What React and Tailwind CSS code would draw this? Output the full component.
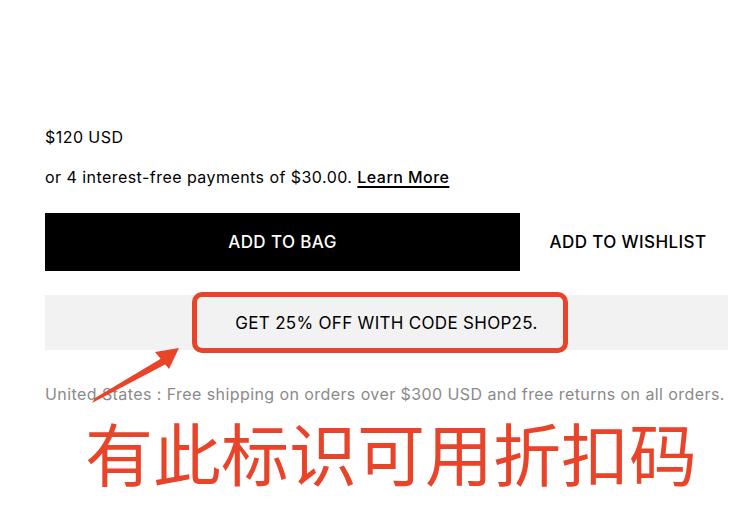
import React from 'react';

const Arrow = () => (
    <svg className="absolute left-0 top-0 pointer-events-none" width="738" height="514" viewBox="0 0 738 514">
        {/* arrow from the shipping line up to the promo box */}
        <polygon points="92,403 95,398 162,358 166,364" fill="#e8442a" />
        <polygon points="179,348 155,352 169,369" fill="#e8442a" />
    </svg>
);

const App = () => {
    return (
        <div className="relative w-[738px] h-[514px] bg-white overflow-hidden font-['Inter','Liberation_Sans',sans-serif] text-black">
            <div className="pl-[45px] pr-[10px] pt-[127px]">
                <p className="text-[16px] leading-[20px] tracking-[0.45px]">$120 USD</p>
                <p className="mt-[20px] text-[16px] leading-[20px] tracking-[0.45px]">
                    or 4 interest-free payments of $30.00.{' '}
                    <a href="#" className="font-medium underline underline-offset-[3px] decoration-[1.5px]">Learn More</a>
                </p>

                <div className="mt-[26px] flex items-center">
                    <button className="w-[475px] h-[58px] pt-[2px] bg-black text-white text-[17px] font-medium tracking-[0.4px]">
                        ADD TO BAG
                    </button>
                    <button className="flex-1 h-[58px] pt-[2px] pl-[8px] text-[17px] font-medium tracking-[0.4px]">
                        ADD TO WISHLIST
                    </button>
                </div>

                {/* promo bar */}
                <div className="relative mt-[24px] h-[55px] pt-[2px] bg-[#f2f2f2] flex items-center justify-center">
                    <span className="text-[17px] tracking-[0.3px]">GET 25% OFF WITH CODE SHOP25.</span>
                    <div className="absolute left-[147px] top-[-3px] w-[376px] h-[61px] border-[5px] border-[#e8442a] rounded-[10px]"></div>
                </div>

                <p className="mt-[34px] text-[16px] leading-[20px] tracking-[0.42px] text-[#8a8a8a]">
                    United States : Free shipping on orders over $300 USD and free returns on all orders.
                </p>

                <p className="mt-[8px] ml-[40px] text-[68px] leading-[80px] text-[#e8442a] font-['Noto_Sans_CJK_SC',sans-serif]">
                    有此标识可用折扣码
                </p>
            </div>
            <Arrow />
        </div>
    );
};

export default App;
